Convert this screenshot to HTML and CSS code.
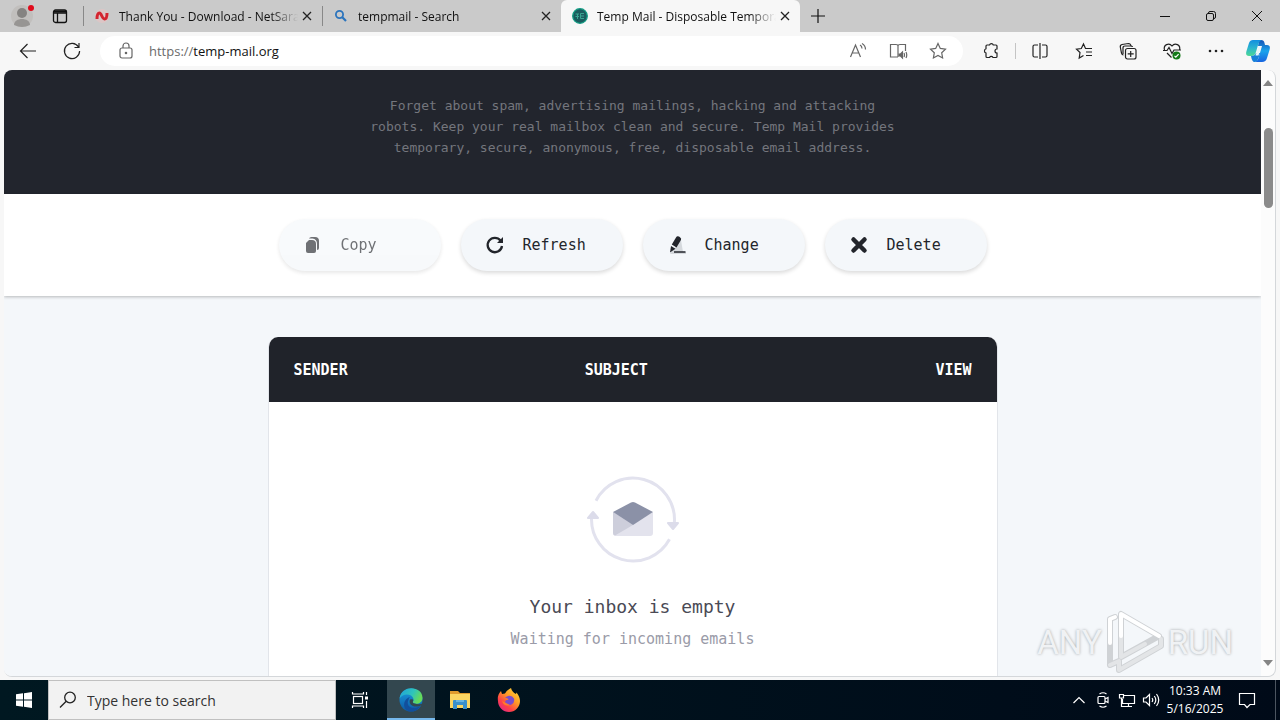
FILE: index.html
```html
<!DOCTYPE html>
<html lang="en">
<head>
    <meta charset="UTF-8">
    <meta name="viewport" content="width=device-width, initial-scale=1.0">
    <title>Temp Mail - Disposable Temporary Email</title>
    <link rel="stylesheet" href="styles.css">
</head>
<body>
    <header class="tab-bar">
        <button class="profile" aria-label="Profile">
            <svg width="28" height="28" viewBox="0 0 28 28"><circle cx="14" cy="14" r="11" fill="#c1bfbd"/><circle cx="14" cy="11" r="5" fill="#858381"/><path d="M6 23c0-8 16-8 16 0q-8 4-16 0z" fill="#979593"/><circle cx="23" cy="6" r="3" fill="#e00b1c"/></svg>
        </button>
        <button class="tab-actions" aria-label="Tab actions">
            <svg width="16" height="16" viewBox="0 0 16 16" fill="none" stroke="#111" stroke-width="1.3"><rect x="1.500" y="2" width="13" height="12.500" rx="2"/><path d="M1.500 5h13M5.500 5v9" /><path d="M2 3.500h12" stroke-width="2"/></svg>
        </button>
        <nav class="tabs">
            <div class="tab">
                <svg width="16" height="16" viewBox="0 0 16 16"><circle cx="8" cy="8" r="7" fill="#dcc6c6"/><path d="M3 11c0-3 .5-6 2.500-6S8 11 10.500 11 13 8 13 5" fill="none" stroke="#d3242f" stroke-width="3"/></svg>
                <span class="tab-title">Thank You - Download - NetSara</span>
                <button class="tab-close" aria-label="Close tab"><svg width="10" height="10" viewBox="0 0 10 10"><path d="M1 1l8 8M9 1l-8 8"/></svg></button>
            </div>
            <div class="tab">
                <svg width="16" height="16" viewBox="0 0 16 16" fill="none" stroke="#2b74bd"><circle cx="6.500" cy="6.500" r="3.600" stroke-width="1.800"/><path d="M9.300 9.300l3.700 3.700" stroke-width="2.200"/></svg>
                <span class="tab-title">tempmail - Search</span>
                <button class="tab-close" aria-label="Close tab"><svg width="10" height="10" viewBox="0 0 10 10"><path d="M1 1l8 8M9 1l-8 8"/></svg></button>
            </div>
            <div class="tab active">
                <svg width="16" height="16" viewBox="0 0 16 16" fill="none"><circle cx="8" cy="8" r="7.300" fill="#1b5c5e" stroke="#129d84" stroke-width="1.300"/><path d="M3.500 6H7M3.500 8.500H7M5.500 6v5M12 5.500H8.500v5H12M8.500 8H12" stroke="#3aa592"/></svg>
                <span class="tab-title">Temp Mail - Disposable Tempora</span>
                <button class="tab-close" aria-label="Close tab"><svg width="10" height="10" viewBox="0 0 10 10"><path d="M1 1l8 8M9 1l-8 8"/></svg></button>
            </div>
        </nav>
        <button class="new-tab" aria-label="New tab"><svg width="14" height="14" viewBox="0 0 14 14" stroke="#111" stroke-width="1.200"><path d="M7 0v14M0 7h14"/></svg></button>
        <div class="window-controls">
            <button aria-label="Minimize"><svg width="10" height="10" viewBox="0 0 10 10"><path d="M0 5.500h10"/></svg></button>
            <button aria-label="Restore"><svg width="10" height="10" viewBox="0 0 10 10"><rect x=".5" y="2.500" width="7" height="7" rx="1.500"/><path d="M2.500 2.500V2Q2.500.5 4 .5h3.500q2 0 2 2V6q0 1.500-1.500 1.500"/></svg></button>
            <button aria-label="Close"><svg width="10" height="10" viewBox="0 0 10 10"><path d="M0 0l10 10M10 0L0 10"/></svg></button>
        </div>
    </header>

    <div class="toolbar">
        <button class="tool" aria-label="Back"><svg width="20" height="20" viewBox="0 0 20 20"><path d="M18 10H2.500M9.500 3l-7 7 7 7"/></svg></button>
        <button class="tool" aria-label="Refresh page"><svg width="20" height="20" viewBox="0 0 20 20"><path d="M16.500 6A7.600 7.600 0 1 0 17.600 10M17 2v4.500h-4.500"/></svg></button>
        <div class="address">
            <svg width="20" height="20" viewBox="0 0 20 20"><rect x="4" y="7" width="12" height="10" rx="2"/><path d="M7 7V5a3 3 0 0 1 6 0v2"/><circle cx="10" cy="12" r=".7" fill="#666"/></svg>
            <label class="address-scheme" for="url">https://</label>
            <input class="address-input" id="url" type="text" value="temp-mail.org">
            <button aria-label="Read aloud"><svg width="20" height="20" viewBox="0 0 20 20"><path d="M2.500 16l5-12 5 12M4.500 12h6M12 4q2 1 2 3.500M14 2.500q3.500 2 3.500 6"/></svg></button>
            <button aria-label="Immersive reader"><svg width="20" height="20" viewBox="0 0 20 20"><path d="M10 16H2.500V3.500H8q2 0 2 1.500 0-1.500 2-1.500h5.500V10M10 5v11"/><path d="M11 13h1.500l2-2v6l-2-2H11z" fill="#666"/><path d="M16 12q1 2 0 4M18 11q1.500 3 0 6"/></svg></button>
            <button aria-label="Add to favorites"><svg width="20" height="20" viewBox="0 0 20 20"><path d="M10 2.500l2.300 4.900 5.200.7-3.800 3.700.9 5.200-4.600-2.500L5.400 17l.9-5.200-3.800-3.700 5.200-.7z"/></svg></button>
        </div>
        <button class="tool" aria-label="Extensions"><svg width="20" height="20" viewBox="0 0 20 20"><path d="M6 4h2.500a2 2 0 0 1 3.800 0H15q1 0 1 1v3a2 2 0 0 0 0 4v3.500q0 1-1 1h-3a2 2 0 0 0-3.500 0H6q-1 0-1-1V12a2.200 2.200 0 0 1 0-4.200V5q0-1 1-1z"/></svg></button>
        <span class="divider"></span>
        <button class="tool" aria-label="Split screen"><svg width="20" height="20" viewBox="0 0 20 20"><path d="M8 4H4.500Q3 4 3 5.500v9Q3 16 4.500 16H8M12 4h3.500Q17 4 17 5.500v9q0 1.500-1.500 1.500H12M10 2v16"/></svg></button>
        <button class="tool" aria-label="Favorites"><svg width="20" height="20" viewBox="0 0 20 20"><path d="M18 7.500h-6.500L9.500 3 7.300 7.500l-4.800.6L6 11.500 5.200 17l4.300-2.500M12 11h6M12 14.500h6"/></svg></button>
        <button class="tool" aria-label="Collections"><svg width="20" height="20" viewBox="0 0 20 20"><rect x="7.500" y="7.500" width="10.500" height="10.500" rx="2"/><path d="M12.700 10v6M9.700 12.900h6M5.500 14q-1.500 0-2-2L2.300 6Q2 4 4 3.500L10.500 2.500q2 0 2.500 2.500"/><path d="M5 13V7q0-2 2-2h6q1.500 0 1.500 1"/></svg></button>
        <button class="tool" aria-label="Browser essentials"><svg width="20" height="20" viewBox="0 0 20 20"><path d="M2.500 9C1 4 7 1 10 5c3-4 9-1 7.500 4M5 12l4.500 4.500M1 9.500h4L7 6.500l3 6 2-3.500h7"/><circle cx="14.500" cy="14.500" r="4" fill="#147a18" stroke="none"/><path d="M12.500 14.800l1.300 1.300 2.800-3" stroke="#fff"/></svg></button>
        <button class="tool" aria-label="Settings and more"><svg width="20" height="20" viewBox="0 0 20 20"><g fill="#222" stroke="none"><circle cx="4" cy="10" r="1.300"/><circle cx="10" cy="10" r="1.300"/><circle cx="16" cy="10" r="1.300"/></g></svg></button>
        <button class="tool copilot" aria-label="Copilot">
            <svg width="24" height="24" viewBox="0 0 24 24">
                <defs>
                    <linearGradient id="cp1" x1="0" y1="0" x2="0" y2="1"><stop offset="0" stop-color="#128ee0"/><stop offset=".5" stop-color="#2bb4cf"/><stop offset="1" stop-color="#4cd894"/></linearGradient>
                    <linearGradient id="cp2" x1="0" y1="0" x2="0" y2="1"><stop offset="0" stop-color="#1450b4"/><stop offset=".5" stop-color="#19a4ec"/><stop offset="1" stop-color="#1764e0"/></linearGradient>
                </defs>
                <path d="M13 1h2q3 0 3.500 3l.5 2h2q4 0 2.500 5L21 19q-1 4-5 4H8q3 0 4.500-4L16 7h-4z" fill="url(#cp2)" stroke="none"/>
                <path d="M7 1h9q-3 1-4 5l-2 7q-1 4-5 4H3q-4 0-2.500-5L3 4q1-3 4-3z" fill="url(#cp1)" stroke="none"/>
                <path d="M5 17q4 0 5-3h4l-1.500 5q-1.500 4-4 4-2.500 0-3.500-6z" fill="#1680d8" stroke="none"/>
                <path d="M12.500 8h2.500l-2.500 8.500H9.500z" fill="#e8f6fb" stroke="none"/>
            </svg>
        </button>
    </div>

    <div class="viewport">
        <main class="page">
            <section class="intro">
                <p>Forget about spam, advertising mailings, hacking and attacking robots. Keep your real mailbox clean and secure. Temp Mail provides temporary, secure, anonymous, free, disposable email address.</p>
            </section>

            <section class="actions">
                <div class="actions-inner">
                    <button class="action faded">
                        <svg width="20" height="20" viewBox="0 0 20 20"><path d="M6 3.500Q6.500 2 8.500 2H12q4 0 4 4v7q0 2-2 2V9q0-5-4.500-5.500z" fill="#22252b"/><path d="M6 5h3q4 0 4 4v7q0 2-2 2H5q-2 0-2-2V8z" fill="#22252b"/></svg>
                        Copy
                    </button>
                    <button class="action">
                        <svg width="20" height="20" viewBox="0 0 20 20" fill="none" stroke="#22252b"><path d="M15.500 5.500A7.200 7.200 0 1 0 17 11" stroke-width="2.300"/><path d="M18 2v6h-6z" fill="#22252b" stroke="none"/></svg>
                        Refresh
                    </button>
                    <button class="action">
                        <svg width="20" height="20" viewBox="0 0 20 20"><path d="M3 19l3-4 8-10 2 12h3v2z" fill="#d5d9dd"/><path d="M9 2.500q1-2 3-1l1 .7q2 1.300.8 3L9.500 12.500 4.800 9.500z" fill="#22252b"/><path d="M4 11l4.500 2.700L3 17.500z" fill="#22252b"/><path d="M7 17h11.500" stroke="#22252b" stroke-width="1.500"/></svg>
                        Change
                    </button>
                    <button class="action">
                        <svg width="20" height="20" viewBox="0 0 20 20"><path d="M4.500 4.500l11 11M15.500 4.500l-11 11" stroke="#22252b" stroke-width="4.500" stroke-linecap="round"/></svg>
                        Delete
                    </button>
                </div>
            </section>

            <section class="inbox">
                <table class="inbox-table">
                    <thead>
                        <tr>
                            <th>SENDER</th>
                            <th>SUBJECT</th>
                            <th class="col-view">VIEW</th>
                        </tr>
                    </thead>
                </table>
                <div class="inbox-empty">
                    <svg width="92" height="88" viewBox="0 0 92 88">
                        <g fill="none" stroke="#e2e2ee" stroke-width="3">
                            <path d="M9 24.700A41.500 41.500 0 0 1 87.400 46"/>
                            <path d="M82.500 63.300A41.500 41.500 0 0 1 4.600 41"/>
                        </g>
                        <path d="M81 47h10l-5 6zM1 42h10l-5-6z" fill="#dcdcea" stroke="#dcdcea" stroke-width="2" stroke-linejoin="round"/>
                        <path d="M26 36v21q0 3 3 3h34q3 0 3-3V36L46 48z" fill="#e3e3ed"/>
                        <path d="M26 36v21q0 2 2 2.500L46 49z" fill="#cdcedb"/>
                        <path d="M26 36l18-9.500q2-1 4 0L66 36 46 49z" fill="#8b91a7"/>
                    </svg>
                    <h2>Your inbox is empty</h2>
                    <p>Waiting for incoming emails</p>
                </div>
            </section>
        </main>

        <div class="scrollbar">
            <svg width="10" height="6" viewBox="0 0 10 6"><path d="M0 6l5-6 5 6z"/></svg>
            <span class="scroll-thumb"></span>
            <svg width="10" height="6" viewBox="0 0 10 6"><path d="M0 0l5 6 5-6z"/></svg>
        </div>

        <div class="watermark">
            <span>ANY</span>
            <svg width="58" height="64" viewBox="0 0 58 64" fill="none" stroke-linejoin="round" stroke-linecap="round"><path d="M9 7L4 9v46M15 4v43l38-21zM4 55l9-4v9l42-24v-7" stroke="#cfd2d5" stroke-width="6"/><path d="M4 55l9-4v9l42-24v-7" stroke="#e3e5e7" stroke-width="4"/><path d="M15 26v21l24-13" stroke="#e3e5e7" stroke-width="4"/><path d="M9 7L4 9v24M15 26V4l38 22" stroke="#fff" stroke-width="4"/></svg>
            <span>RUN</span>
        </div>
    </div>

    <footer class="taskbar">
        <button class="task start" aria-label="Start"><svg width="16" height="16" viewBox="0 0 16 16" fill="#fff"><path d="M0 2.300l7-1v6.200H0zM8 1.200L16 0v7.500H8zM0 8.500h7v6.200l-7-1zM8 8.500h8V16l-8-1.200z"/></svg></button>
        <label class="search">
            <svg width="18" height="18" viewBox="0 0 18 18" fill="none" stroke="#222" stroke-width="1.300"><circle cx="11" cy="6.500" r="5.300"/><path d="M7.200 10.300L1 16.500"/></svg>
            <input type="text" placeholder="Type here to search" aria-label="Search">
        </label>
        <button class="task view" aria-label="Task view"><svg width="18" height="18" viewBox="0 0 18 18" fill="none" stroke="#fff" stroke-width="1.200"><rect x="2.500" y="5.500" width="9" height="7"/><path d="M1.500 1v2h11V1M1.500 17v-2h11v2M15.500 1v3M15.500 10v7"/><path d="M15.500 5.500v3" stroke-width="3"/></svg></button>
        <button class="task open" aria-label="Microsoft Edge">
            <svg width="24" height="24" viewBox="0 0 24 24">
                <defs>
                    <linearGradient id="edge1" x1="0" y1="0" x2="1" y2=".4"><stop offset="0" stop-color="#1fa1dd"/><stop offset=".6" stop-color="#2fc4bb"/><stop offset="1" stop-color="#66db59"/></linearGradient>
                    <linearGradient id="edge2" x1="0" y1="0" x2="0" y2="1"><stop offset="0" stop-color="#1b9de0"/><stop offset="1" stop-color="#0c59a4"/></linearGradient>
                </defs>
                <circle cx="12" cy="12" r="11.500" fill="url(#edge2)"/>
                <path d="M.6 10.500C2-3.500 23.500-2.500 23.500 10c0 5-5.500 7-9.500 5-1-1 1-1.500.5-4C13 5.500 4 5 .6 10.500z" fill="url(#edge1)"/>
                <path d="M9.500 12c-3 6 3 10.500 12 6q-4 6-10.500 5.500C3 22 3.500 11 11 9q-1.500 1-1.500 3z" fill="#124f9c"/>
                <path d="M11 11.500c-2 5 4 9.500 12 5.500l1-1.500q-4 1.500-9.500-.3-1.500-1-.2-2.700 0-2-3.300-1z" fill="#33474f"/>
            </svg>
        </button>
        <button class="task" aria-label="File Explorer"><svg width="24" height="24" viewBox="0 0 24 24"><path d="M2 3h8l2 2h10v3H2z" fill="#e09b2d"/><path d="M2 6h20v14H2z" fill="#fbd562"/><path d="M5 21v-8q0-1 1-1h12q1 0 1 1v8h-4v-4H9v4z" fill="#3a8fcb"/><path d="M8 12h8v2H8z" fill="#69b4e0"/></svg></button>
        <button class="task" aria-label="Firefox">
            <svg width="24" height="24" viewBox="0 0 24 24">
                <defs><linearGradient id="ff" x1="1" y1="0" x2=".2" y2="1"><stop offset="0" stop-color="#ffe23c"/><stop offset=".45" stop-color="#ff9a26"/><stop offset=".75" stop-color="#ff4047"/><stop offset="1" stop-color="#e02888"/></linearGradient></defs>
                <path d="M1 13Q0 7 4 3l1 3 3-.5Q10 2 14 0q1 4 5 6l.5-1.500Q23 9 23 13a11 11 0 0 1-22 0z" fill="url(#ff)"/>
                <path d="M8 9.500l3-1.500q4-1 6 2.500 1 4-2.500 6-4 1.500-6-1-1-2.500 1-3.500 1.500.3 2-.8-1-1.200-3.500-1.700z" fill="#7a4dcc"/>
                <path d="M5 13q2 6 8 4-4-2-8-4z" fill="#ff7b2a"/>
            </svg>
        </button>
        <div class="tray">
            <button aria-label="Show hidden icons"><svg width="18" height="18" viewBox="0 0 18 18"><path d="M3.500 12L9 6.500l5.500 5.500"/></svg></button>
            <button aria-label="Meet now"><svg width="18" height="18" viewBox="0 0 18 18"><rect x="4" y="5.500" width="7" height="7" rx="1"/><path d="M11 8l3-1.500v5L11 10M5.500 3Q9 .5 12.500 3M5.500 15q3.500 2.500 7 0"/></svg></button>
            <button aria-label="Network"><svg width="18" height="18" viewBox="0 0 18 18"><path d="M6 4.500h10.500v8H4.500V8M7 15.500h7M10.500 12.500v3M1.500 3.500h4V7h-4zM3.500 7v8.500H7"/></svg></button>
            <button aria-label="Volume"><svg width="18" height="18" viewBox="0 0 18 18"><path d="M1.500 7H4l3.500-3.500v11L4 11H1.500zM10 7q1.500 2 0 4M12.300 5q3 4 0 8M14.500 3q4.500 6 0 12"/></svg></button>
            <div class="clock">
                <time>10:33 AM</time>
                <time>5/16/2025</time>
            </div>
            <button class="notifications" aria-label="Notifications"><svg width="18" height="18" viewBox="0 0 18 18"><path d="M1.500 2.500h15v11H12l-3 3-2.500-3h-5z"/></svg></button>
        </div>
    </footer>
</body>
</html>
```
FILE: styles.css
```css
* {
    box-sizing: border-box;
}
body {
    margin: 0;
    height: 100vh;
    display: flex;
    flex-direction: column;
    overflow: hidden;
    background-color: #f7f7f7;
    color: #111;
    font-family: "Open Sans", "Noto Sans", sans-serif;
    font-size: 12px;
}
button, input {
    font: inherit;
    color: inherit;
    border: none;
    background: none;
    padding: 0;
    margin: 0;
}
button {
    display: flex;
    align-items: center;
    justify-content: center;
    cursor: pointer;
}
svg {
    flex-shrink: 0;
}

/* Tab strip */
.tab-bar {
    display: flex;
    height: 32px;
    flex-shrink: 0;
    background-color: #cacaca;
}
.profile {
    width: 44px;
}
.tab-actions {
    width: 32px;
    margin-right: 7px;
}
.tabs {
    display: flex;
    flex: 0 1 717px;
    min-width: 0;
}
.tab {
    flex: 1;
    min-width: 0;
    display: flex;
    align-items: center;
    padding: 0 9px 0 11px;
    gap: 9px;
    background: linear-gradient(#888, #888) left center / 1px 20px no-repeat;
}
.tab.active {
    background: #f7f7f7;
    border-radius: 6px 6px 0 0;
}
.tab-title {
    flex: 1;
    white-space: nowrap;
    overflow: hidden;
    margin-right: -6px;
    mask-image: linear-gradient(to right, #000 85%, transparent);
}
.tab-close {
    width: 12px;
    height: 16px;
}
.tab-close svg {
    stroke: #222;
    stroke-width: 1.3;
}
.new-tab {
    width: 36px;
}
.window-controls {
    display: flex;
    margin-left: auto;
}
.window-controls button {
    width: 46px;
}
.window-controls svg {
    fill: none;
    stroke: #111;
}

/* Address bar */
.toolbar {
    display: flex;
    align-items: center;
    height: 38px;
    flex-shrink: 0;
    padding: 0 2px 0 6px;
}
.tool {
    width: 44px;
    height: 32px;
}
.toolbar svg {
    fill: none;
    stroke: #222;
    stroke-width: 1.2;
}
.copilot {
    width: 40px;
}
.divider {
    width: 1px;
    height: 16px;
    margin: 0 2px;
    background-color: #c4c4c4;
}
.address {
    flex: 1;
    display: flex;
    align-items: center;
    height: 30px;
    margin: 0 6px;
    padding: 0 5px 0 16px;
    border-radius: 15px;
    background-color: #fff;
    font-size: 13px;
}
.address svg {
    stroke: #666;
}
.address button {
    width: 40px;
    height: 28px;
}
.address-scheme {
    margin-left: 13px;
    color: #6b6b6b;
}
.address-input {
    flex: 1;
    min-width: 0;
}

/* Web page */
.viewport {
    position: relative;
    flex: 1;
    min-height: 0;
    display: flex;
    margin: 0 4px 3px;
    border: 1px solid #d4d7da;
    border-width: 0 1px 1px 0;
    border-radius: 8px;
    overflow: hidden;
    background-color: #fcfcfc;
}
.page {
    flex: 1;
    overflow: hidden;
    background-color: #f4f7fa;
    font-family: "DejaVu Sans Mono", monospace;
}
.intro {
    padding: 25px 20px 36px;
    background-color: #22252d;
}
.intro p {
    max-width: 544px;
    margin: 0 auto;
    color: #74767d;
    font-size: 13px;
    line-height: 21px;
    text-align: center;
}
.actions {
    padding: 25px 20px;
    background-color: #fff;
    box-shadow: 0 1px 3px rgba(0, 0, 0, 0.25);
}
.actions-inner {
    display: flex;
    gap: 20px;
    max-width: 708px;
    margin: 0 auto;
}
.action {
    flex: 1;
    justify-content: flex-start;
    gap: 18px;
    height: 52px;
    padding-left: 24px;
    border-radius: 26px;
    background-color: #f4f7fa;
    box-shadow: 0 2px 4px rgba(0, 0, 0, 0.15);
    color: #22252b;
    font-size: 15px;
}
.action.faded {
    opacity: 0.65;
}
.inbox {
    max-width: 730px;
    margin: 41px auto 0;
    border: 1px solid #e2e5ea;
    border-top: none;
    border-radius: 10px;
    overflow: hidden;
    background-color: #fff;
}
.inbox-table {
    width: 100%;
    table-layout: fixed;
    border-collapse: collapse;
    background-color: #20232a;
    color: #fff;
}
.inbox-table th {
    width: 40%;
    height: 65px;
    padding: 0 25px;
    font-size: 15px;
    text-align: left;
}
.inbox-table .col-view {
    width: 20%;
    text-align: right;
}
.inbox-empty {
    display: flex;
    flex-direction: column;
    align-items: center;
    padding: 74px 20px 80px;
}
.inbox-empty h2 {
    margin: 29px 0 6px;
    color: #4a4a55;
    font-size: 18px;
    font-weight: normal;
    line-height: 28px;
}
.inbox-empty p {
    margin: 0;
    color: #9a9ba8;
    font-size: 15px;
    line-height: 24px;
}
.scrollbar {
    display: flex;
    flex-direction: column;
    align-items: center;
    width: 14px;
    padding: 10px 0;
    fill: #858585;
}
.scroll-thumb {
    width: 9px;
    height: 80px;
    margin: 42px 0 auto;
    border-radius: 5px;
    background-color: #8b8b8b;
}
.watermark {
    position: absolute;
    right: 42px;
    bottom: 2px;
    display: flex;
    align-items: center;
    gap: 4px;
    color: #f0f2f4;
    font-family: Roboto, sans-serif;
    font-size: 33px;
    text-shadow: 0 0 3px #a0a4a7;
}

/* Taskbar */
.taskbar {
    display: flex;
    height: 40px;
    flex-shrink: 0;
    background: linear-gradient(to right, #001821, #000a18);
    color: #fff;
}
.task {
    width: 49px;
}
.task.start, .task.open {
    width: 48px;
}
.task.view {
    width: 51px;
    padding-right: 3px;
}
.task.open {
    background-color: #33474f;
    box-shadow: inset 0 -2px #76b9ed;
}
.search {
    display: flex;
    align-items: center;
    width: 288px;
    padding: 0 10px;
    gap: 10px;
    border: 1px solid #c0c0c0;
    background-color: #f2f2f2;
    color: #222;
    font-size: 14px;
}
.search input {
    flex: 1;
    min-width: 0;
}
.search input::placeholder {
    color: #333;
    opacity: 1;
}
.tray {
    display: flex;
    margin-left: auto;
    margin-right: 4px;
    border-right: 1px solid #4c5560;
}
.tray button {
    width: 24px;
}
.tray svg {
    fill: none;
    stroke: #fff;
    stroke-width: 1.2;
}
.clock {
    display: flex;
    flex-direction: column;
    align-items: center;
    justify-content: center;
    width: 64px;
    line-height: 18px;
}
.tray .notifications {
    width: 48px;
    padding-right: 8px;
}
```
